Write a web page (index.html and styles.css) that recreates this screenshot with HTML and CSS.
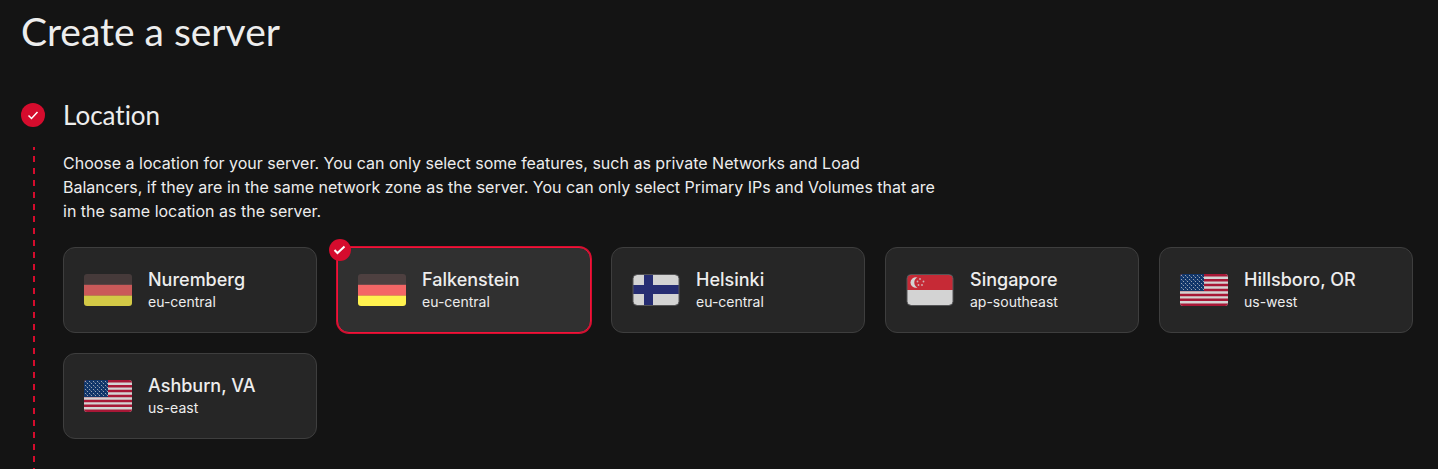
FILE: index.html
```html
<!DOCTYPE html>
<html lang="en">
<head>
    <meta charset="UTF-8">
    <meta name="viewport" content="width=device-width, initial-scale=1.0">
    <title>Create a server</title>
    <link rel="stylesheet" href="styles.css">
</head>
<body>
    <!-- Flags shared by the location cards -->
    <svg class="sprite" aria-hidden="true">
        <defs>
            <clipPath id="round"><rect width="48" height="32" rx="3"/></clipPath>
            <pattern id="stars" width="4" height="4" patternUnits="userSpaceOnUse">
                <rect x="1" y="1" width="1" height="1" fill="#b9c6da"/>
                <rect x="3" y="3" width="1" height="1" fill="#b9c6da"/>
                <rect x="2" y="2" width="1" height="1" fill="#4b6c9c"/>
            </pattern>
            <symbol id="flag-de" viewBox="0 0 48 32">
                <g clip-path="url(#round)">
                    <rect width="48" height="11" fill="#4e4040"/>
                    <rect y="11" width="48" height="11" fill="#f46666"/>
                    <rect y="22" width="48" height="10" fill="#fff24f"/>
                    <path d="M0 10.5h48" stroke="#855050" stroke-opacity=".6"/>
                    <path d="M0 21.5h48" stroke="#d8a850" stroke-opacity=".7"/>
                </g>
            </symbol>
            <symbol id="flag-fi" viewBox="0 0 48 32">
                <rect x="1" y="1" width="46" height="30" rx="4" fill="#fff"/>
                <path d="M1 15.5h46M16.500 1v30" stroke="#262f86" stroke-width="9"/>
                <rect x="1" y=".5" width="46" height="31" rx="4" fill="none" stroke="#606063"/>
            </symbol>
            <symbol id="flag-sg" viewBox="0 0 48 32">
                <rect x="1" y="1" width="46" height="30" rx="4" fill="#fff"/>
                <path d="M1 16V5a4 4 0 0 1 4-4h38a4 4 0 0 1 4 4v11z" fill="#ef2b3b"/>
                <path d="M11.500 3.500a5.300 5.300 0 1 0 0 10 5.500 5.500 0 0 1 0-10z" fill="#fff"/>
                <g fill="#fbd5d8">
                    <circle cx="14" cy="5" r=".9"/>
                    <circle cx="11.500" cy="7.500" r=".9"/>
                    <circle cx="17.500" cy="7.500" r=".9"/>
                    <circle cx="12.500" cy="11" r=".9"/>
                    <circle cx="16" cy="11" r=".9"/>
                </g>
                <rect x="1" y=".5" width="46" height="31" rx="4" fill="none" stroke="#606063"/>
            </symbol>
            <symbol id="flag-us" viewBox="0 0 48 32">
                <g clip-path="url(#round)">
                    <rect width="48" height="32" fill="#fff"/>
                    <path d="M0 1.230h48M0 6.150h48M0 11.080h48M0 16h48M0 20.920h48M0 25.850h48M0 30.770h48" stroke="#c8143a" stroke-width="2.460"/>
                    <rect width="24" height="17" fill="#0c3a7c"/>
                    <rect width="24" height="17" fill="url(#stars)"/>
                </g>
            </symbol>
        </defs>
    </svg>

    <main>
        <h1>Create a server</h1>

        <section class="step">
            <span class="step-badge">
                <svg viewBox="0 0 24 24" aria-hidden="true"><path d="M7.500 12.500l3 3 6-6.500"/></svg>
            </span>
            <h2 id="location-title">Location</h2>
            <div class="step-line"></div>
            <div class="step-content">
                <p>
                    Choose a location for your server. You can only select some features, such as private Networks and Load<br>
                    Balancers, if they are in the same network zone as the server. You can only select Primary IPs and Volumes that are<br>
                    in the same location as the server.
                </p>

                <div class="locations" role="radiogroup" aria-labelledby="location-title">
                    <label class="card" for="nuremberg">
                        <input type="radio" name="location" id="nuremberg">
                        <svg class="flag" aria-hidden="true"><use href="#flag-de"/></svg>
                        <span class="info">
                            <span class="city">Nuremberg</span>
                            <span class="zone">eu-central</span>
                        </span>
                    </label>
                    <label class="card" for="falkenstein">
                        <input type="radio" name="location" id="falkenstein" checked>
                        <svg class="flag" aria-hidden="true"><use href="#flag-de"/></svg>
                        <span class="info">
                            <span class="city">Falkenstein</span>
                            <span class="zone">eu-central</span>
                        </span>
                        <svg class="check" viewBox="0 0 22 22" aria-hidden="true"><path d="M5.500 11l3 3 7-6.500"/></svg>
                    </label>
                    <label class="card" for="helsinki">
                        <input type="radio" name="location" id="helsinki">
                        <svg class="flag" aria-hidden="true"><use href="#flag-fi"/></svg>
                        <span class="info">
                            <span class="city">Helsinki</span>
                            <span class="zone">eu-central</span>
                        </span>
                    </label>
                    <label class="card" for="singapore">
                        <input type="radio" name="location" id="singapore">
                        <svg class="flag" aria-hidden="true"><use href="#flag-sg"/></svg>
                        <span class="info">
                            <span class="city">Singapore</span>
                            <span class="zone">ap-southeast</span>
                        </span>
                    </label>
                    <label class="card" for="hillsboro">
                        <input type="radio" name="location" id="hillsboro">
                        <svg class="flag" aria-hidden="true"><use href="#flag-us"/></svg>
                        <span class="info">
                            <span class="city">Hillsboro, OR</span>
                            <span class="zone">us-west</span>
                        </span>
                    </label>
                    <label class="card" for="ashburn">
                        <input type="radio" name="location" id="ashburn">
                        <svg class="flag" aria-hidden="true"><use href="#flag-us"/></svg>
                        <span class="info">
                            <span class="city">Ashburn, VA</span>
                            <span class="zone">us-east</span>
                        </span>
                    </label>
                </div>
            </div>
        </section>
    </main>
</body>
</html>
```
FILE: styles.css
```css
* {
    box-sizing: border-box;
}
body {
    margin: 0;
    background-color: #141414;
    color: #ededed;
    font-family: Inter, "Liberation Sans", sans-serif;
}
.sprite {
    position: absolute;
    width: 0;
    height: 0;
}
main {
    display: flex;
    flex-direction: column;
    min-height: 100vh;
    padding: 7px 25px 0 21px;
}
h1, h2 {
    margin: 0;
    font-family: Lato, sans-serif;
    font-weight: 400;
    font-variant-ligatures: none;
}
h1 {
    margin-bottom: 44px;
    font-size: 39px;
    line-height: 48px;
}
h2 {
    font-size: 26px;
    line-height: 32px;
}
.step {
    display: grid;
    flex: 1;
    grid-template-columns: 24px 1fr;
    grid-template-rows: auto 1fr;
    column-gap: 18px;
    row-gap: 16px;
}
.step-badge {
    align-self: center;
    height: 24px;
    border-radius: 50%;
    background-color: #d50c2d;
}
.step-badge svg {
    display: block;
}
.step-badge path,
.check path {
    fill: none;
    stroke: #fff;
}
.step-badge path {
    stroke-width: 1.5px;
}
.step-line {
    width: 2px;
    margin-left: 12px;
    background: repeating-linear-gradient(#d50c2d 0 3px, transparent 3px 9px, #d50c2d 9px 12px);
}
.step-content {
    padding: 4px 0 29px;
}
p {
    max-width: 900px;
    margin: 0 0 24px;
    font-size: 16px;
    line-height: 24px;
}
.locations {
    display: grid;
    grid-template-columns: repeat(auto-fill, minmax(240px, 1fr));
    gap: 20px;
}
.card {
    position: relative;
    display: flex;
    align-items: center;
    gap: 16px;
    padding: 19px 20px 20px;
    border: 1px solid #3e3e3e;
    border-radius: 12px;
    background-color: #262626;
    cursor: pointer;
}
.card input {
    position: absolute;
    margin: 0;
    opacity: 0;
}
.card:has(input:checked) {
    border-color: #f0143a;
    background-color: #303030;
    box-shadow: 0 0 0 1px #d50c2d;
}
.flag {
    flex: none;
    width: 48px;
    height: 32px;
    opacity: 0.8;
}
.card input:checked + .flag {
    opacity: 1;
}
.info {
    display: flex;
    flex-direction: column;
}
.city {
    font-size: 18px;
    font-weight: 500;
    line-height: 25px;
}
.zone {
    font-size: 14px;
    line-height: 20px;
}
.check {
    position: absolute;
    top: -9px;
    left: -9px;
    width: 22px;
    height: 22px;
    border-radius: 50%;
    background-color: #d50c2d;
}
.check path {
    stroke-width: 2px;
}
```
